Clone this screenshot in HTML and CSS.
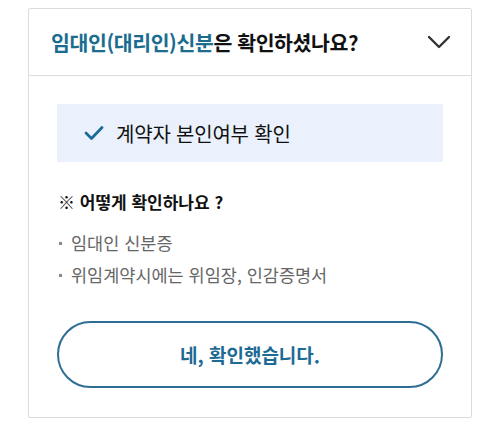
FILE: index.html
```html
<!DOCTYPE html>
<html lang="ko">
<head>
    <meta charset="UTF-8">
    <meta name="viewport" content="width=device-width, initial-scale=1.0">
    <title>임대인 신분 확인</title>
    <link rel="stylesheet" href="styles.css">
</head>
<body>
    <div class="card">
        <div class="card-header">
            <h2 class="title"><span class="accent">임대인(대리인)신분</span>은 확인하셨나요?</h2>
            <svg class="chevron" width="24" height="14" viewBox="0 0 24 14">
                <path d="M2 2 L12 12 L22 2" fill="none" stroke="#333" stroke-width="2.4" stroke-linecap="round" stroke-linejoin="round"/>
            </svg>
        </div>
        <div class="card-body">
            <div class="check-box">
                <svg class="check" width="20" height="16" viewBox="0 0 20 16">
                    <path d="M2 8 L7.5 13.5 L18 2.5" fill="none" stroke="#1d6a94" stroke-width="2.8" stroke-linecap="round" stroke-linejoin="round"/>
                </svg>
                <span>계약자 본인여부 확인</span>
            </div>
            <p class="how">※ 어떻게 확인하나요 ?</p>
            <ul class="docs">
                <li>임대인 신분증</li>
                <li>위임계약시에는 위임장, 인감증명서</li>
            </ul>
            <button class="confirm">네, 확인했습니다.</button>
        </div>
    </div>
</body>
</html>
```

FILE: styles.css
```css
body {
    margin: 0;
    padding: 8px 0 0 28px;
    font-family: "Noto Sans CJK KR", "Noto Sans", sans-serif;
    background: #fff;
    color: #111;
}
.card {
    width: 442px;
    border: 1.5px solid #dcdcdc;
    border-radius: 2px;
}
.card-header {
    height: 66px;
    display: flex;
    align-items: center;
    justify-content: space-between;
    padding: 0 20px 0 22px;
    border-bottom: 1.5px solid #dcdcdc;
}
.title {
    margin: 0;
    font-size: 20.5px;
    font-weight: 700;
    letter-spacing: -0.4px;
}
.accent {
    color: #1b6d8f;
}
.card-body {
    padding: 28px 28px 29px 28px;
}
.check-box {
    height: 58px;
    background: #eaf1fc;
    display: flex;
    align-items: center;
    padding-left: 27px;
    font-size: 20px;
    letter-spacing: -0.2px;
}
.check {
    margin-right: 12px;
}
.how {
    margin: 27px 0 0 1px;
    font-size: 17px;
    font-weight: 700;
    line-height: 26px;
}
.docs {
    list-style: none;
    margin: 12px 0 0 0;
    padding: 0;
    color: #666;
    font-size: 17.5px;
}
.docs li {
    position: relative;
    padding-left: 14px;
    line-height: 32px;
}
.docs li::before {
    content: "";
    position: absolute;
    left: 2px;
    top: 15px;
    width: 3px;
    height: 3px;
    background: #888;
}
.confirm {
    display: block;
    width: 100%;
    height: 67px;
    margin-top: 30px;
    border: 2px solid #2f6e94;
    border-radius: 34px;
    background: #fff;
    color: #1d6a94;
    font-family: inherit;
    font-size: 19px;
    font-weight: 700;
}
```
